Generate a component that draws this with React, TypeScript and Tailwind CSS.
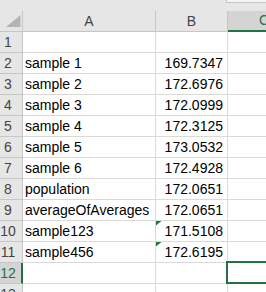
const rows: [string, string][] = [
  ["", ""],
  ["sample 1", "169.7347"],
  ["sample 2", "172.6976"],
  ["sample 3", "172.0999"],
  ["sample 4", "172.3125"],
  ["sample 5", "173.0532"],
  ["sample 6", "172.4928"],
  ["population", "172.0651"],
  ["averageOfAverages", "172.0651"],
  ["sample123", "171.5108"],
  ["sample456", "172.6195"],
  ["", ""],
  ["", ""],
];

// rows whose B cell has the green "number stored as text" flag
const flagged = [10, 11];
const selectedRow = 12;

function Flag() {
  return (
    <svg className="absolute left-0 top-0" width="6" height="5" viewBox="0 0 6 5">
      <polygon points="0,0 5.5,0 0,4.5" fill="#1f7a3a" />
    </svg>
  );
}

export default function App() {
  return (
    <div
      className="w-[266px] h-[292px] overflow-hidden bg-white text-[14px] text-black"
      style={{ fontFamily: '"Liberation Sans", Arial, sans-serif' }}
    >
      {/* strip above the column headers */}
      <div className="h-[11px] bg-[#e6e6e6] flex justify-end">
        <div className="w-[40px] h-[3px] bg-[#f4f4f4] border-l border-b border-[#c6c6c6]" />
      </div>

      {/* column headers */}
      <div className="flex h-[21px] bg-[#e6e6e6] text-[#444]">
        <div className="w-[23px] shrink-0 border-r border-b border-[#c6c6c6] relative">
          <svg className="absolute left-0 top-0" width="23" height="21" viewBox="0 0 23 21">
            <polygon points="20.5,4 20.5,16 6,16" fill="#b4b4b4" />
          </svg>
        </div>
        <div className="w-[133px] shrink-0 border-r border-b border-[#c6c6c6] flex items-center justify-center leading-[21px]">
          A
        </div>
        <div className="w-[72px] shrink-0 border-r border-b border-[#c6c6c6] flex items-center justify-center leading-[21px]">
          B
        </div>
        <div className="w-[72px] shrink-0 bg-[#d4d4d4] border-b-2 border-[#217346] text-[#217346] flex items-center justify-center leading-[21px]">
          C
        </div>
      </div>

      {rows.map(([label, value], i) => {
        const n = i + 1;
        const sel = n === selectedRow;
        return (
          <div key={n} className="flex h-[21px] leading-[21px]">
            <div
              className={
                sel
                  ? "w-[23px] shrink-0 bg-[#d4d4d4] text-[#217346] border-r-2 border-r-[#217346] border-b border-b-[#c6c6c6] flex items-center justify-center pr-[5px]"
                  : "w-[23px] shrink-0 bg-[#e6e6e6] text-[#444] border-r border-b border-[#c6c6c6] flex items-center justify-center pr-[6px]"
              }
            >
              {n}
            </div>
            <div className="w-[133px] shrink-0 border-r border-b border-[#d9d9d9] flex items-center pl-[2px] whitespace-nowrap overflow-hidden">
              {label}
            </div>
            <div className="w-[72px] shrink-0 border-r border-b border-[#d9d9d9] flex items-center justify-end pr-[4px] relative">
              {flagged.includes(n) && <Flag />}
              {value}
            </div>
            <div className="w-[72px] shrink-0 border-b border-[#d9d9d9] relative">
              {sel && (
                <div className="absolute -left-[2px] -top-[2px] -bottom-[1px] right-0 border-2 border-[#217346]" />
              )}
            </div>
          </div>
        );
      })}
    </div>
  );
}
